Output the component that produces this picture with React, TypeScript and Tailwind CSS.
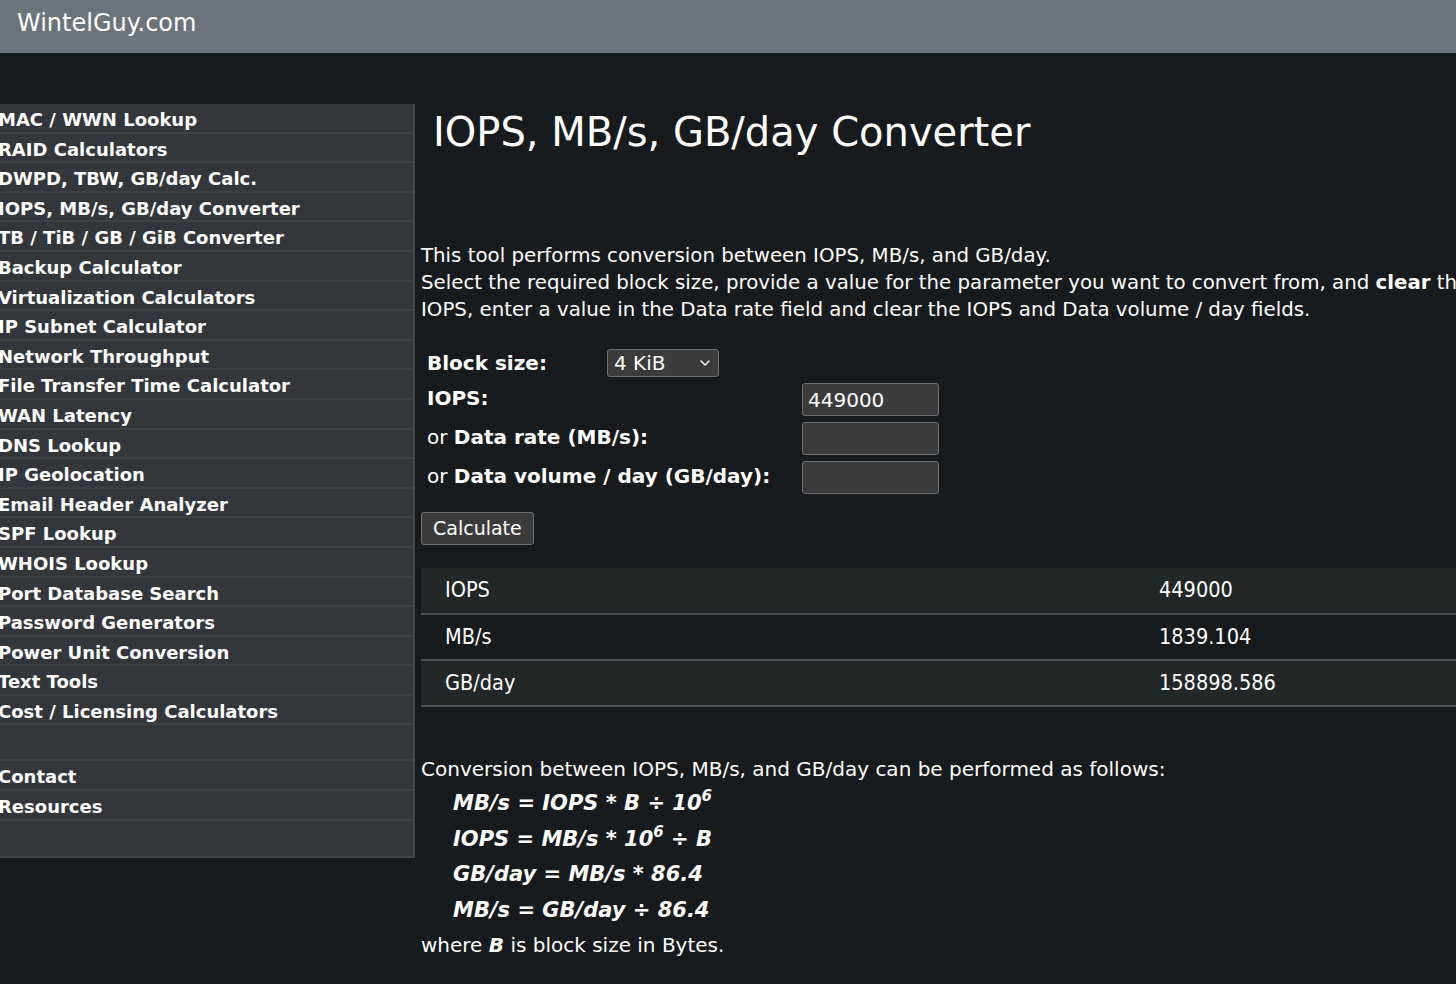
import { ChevronDown } from "lucide-react";

const tools = [
    "MAC / WWN Lookup",
    "RAID Calculators",
    "DWPD, TBW, GB/day Calc.",
    "IOPS, MB/s, GB/day Converter",
    "TB / TiB / GB / GiB Converter",
    "Backup Calculator",
    "Virtualization Calculators",
    "IP Subnet Calculator",
    "Network Throughput",
    "File Transfer Time Calculator",
    "WAN Latency",
    "DNS Lookup",
    "IP Geolocation",
    "Email Header Analyzer",
    "SPF Lookup",
    "WHOIS Lookup",
    "Port Database Search",
    "Password Generators",
    "Power Unit Conversion",
    "Text Tools",
    "Cost / Licensing Calculators",
];

const results = [
    { name: "IOPS", value: "449000" },
    { name: "MB/s", value: "1839.104" },
    { name: "GB/day", value: "158898.586" },
];

function NavItem({ label }: { label: string }) {
    return (
        <a
            href="#"
            className="block h-[29.6px] border-b-2 border-[#3d4145] -ml-[2px] pt-[2px] text-[18px] font-bold leading-[28px] text-white whitespace-nowrap"
        >
            {label}
        </a>
    );
}

const field =
    "w-[137px] h-[33px] border border-[#6b6f73] rounded-[3px] bg-[#3b3b3b] px-[5px] text-[20px] text-white outline-none";

export default function App() {
    return (
        <div className="min-h-screen bg-[#181b1d] text-white font-['DejaVu_Sans',sans-serif] overflow-hidden">
            {/* Header */}
            <div className="h-[53px] bg-[#6c737b] px-[17px] pb-[8px] flex items-center">
                <span className="text-[24px] text-white">WintelGuy.com</span>
            </div>

            <div className="flex gap-[6px] pt-[51px] w-[1600px]">
                {/* Sidebar */}
                <div className="w-[415px] shrink-0 self-start bg-[#33373b] border-r-2 border-b-2 border-[#42464a] overflow-hidden">
                    {tools.map((t) => (
                        <NavItem key={t} label={t} />
                    ))}
                    <div className="h-[36px] border-b-2 border-[#3d4145]" />
                    <NavItem label="Contact" />
                    <NavItem label="Resources" />
                    <div className="h-[35px]" />
                </div>

                {/* Main */}
                <div className="flex-1 pr-4">
                    <h1 className="pl-[12px] pt-[2px] h-[138px] text-[40px] leading-[52px]">
                        IOPS, MB/s, GB/day Converter
                    </h1>

                    <div className="text-[19.8px] leading-[27px] whitespace-nowrap">
                        <p>This tool performs conversion between IOPS, MB/s, and GB/day.</p>
                        <p>
                            Select the required block size, provide a value for the parameter you want to convert
                            from, and <b>clear</b> the other fields. For example, to convert from MB/s to
                        </p>
                        <p>IOPS, enter a value in the Data rate field and clear the IOPS and Data volume / day fields.</p>
                    </div>

                    {/* Form */}
                    <div className="mt-[22px] ml-[6px] text-[20px]">
                        <div className="flex items-center h-[35px]">
                            <span className="w-[180px] font-bold">Block size:</span>
                            <div className="relative w-[112px] h-[28px] border border-[#6b6f73] rounded-[3px] bg-[#3b3b3b] flex items-center px-[6px]">
                                <span className="text-[20px]">4 KiB</span>
                                <ChevronDown className="absolute right-[5px] top-[5px] h-[16px] w-[16px]" strokeWidth={2} />
                            </div>
                        </div>
                        <div className="flex items-center h-[39px]">
                            <span className="w-[375px] font-bold -mt-[3px]">IOPS:</span>
                            <input type="text" defaultValue="449000" className={field} />
                        </div>
                        <div className="flex items-center h-[39px]">
                            <span className="w-[375px] -mt-[3px]">
                                or <b>Data rate (MB/s):</b>
                            </span>
                            <input type="text" className={field} />
                        </div>
                        <div className="flex items-center h-[39px]">
                            <span className="w-[375px] -mt-[3px]">
                                or <b>Data volume / day (GB/day):</b>
                            </span>
                            <input type="text" className={field} />
                        </div>
                    </div>

                    <button className="mt-[15px] h-[33px] px-[11px] border border-[#6b6f73] rounded-[3px] bg-[#3b3b3b] text-[19px] text-white">
                        Calculate
                    </button>

                    {/* Results */}
                    <table className="mt-[23px] w-[1100px] border-collapse font-['DejaVu_Sans_Condensed',sans-serif] text-[21.5px]">
                        <tbody>
                            {results.map((r, i) => (
                                <tr
                                    key={r.name}
                                    className={`h-[46px] border-b-2 border-[#4a4f55] ${i % 2 === 0 ? "bg-[#222728]" : "bg-[#181b1d]"}`}
                                >
                                    <td className="pl-[24px] w-[738px]">{r.name}</td>
                                    <td>{r.value}</td>
                                </tr>
                            ))}
                        </tbody>
                    </table>

                    {/* Formulas */}
                    <div className="mt-[49px] text-[20px] whitespace-nowrap">
                        <p className="leading-[26px]">Conversion between IOPS, MB/s, and GB/day can be performed as follows:</p>
                        <div className="mt-[4px] pl-[32px] font-bold italic text-[21px]">
                            <p className="leading-[35.5px]">
                                MB/s = IOPS * B ÷ 10<sup className="text-[15px] -top-[9px]">6</sup>
                            </p>
                            <p className="leading-[35.5px]">
                                IOPS = MB/s * 10<sup className="text-[15px] -top-[9px]">6</sup> ÷ B
                            </p>
                            <p className="leading-[35.5px]">GB/day = MB/s * 86.4</p>
                            <p className="leading-[35.5px]">MB/s = GB/day ÷ 86.4</p>
                        </div>
                        <p className="leading-[35.5px]">
                            where <b><i>B</i></b> is block size in Bytes.
                        </p>
                    </div>
                </div>
            </div>
        </div>
    );
}
